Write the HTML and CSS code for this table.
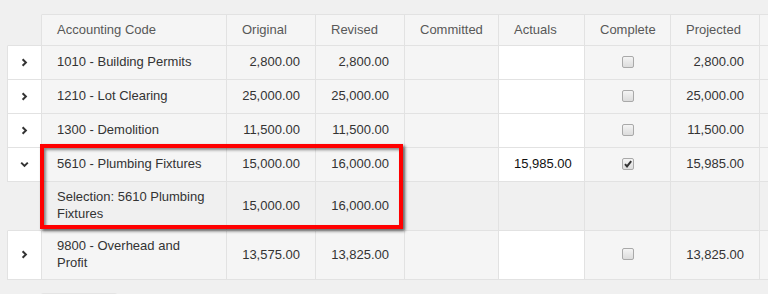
FILE: index.html
```html
<!DOCTYPE html>
<html>
<head>
<meta charset="utf-8">
<link rel="stylesheet" href="styles.css">
</head>
<body>
<div class="page">
  <div class="grid-wrap">
    <table class="grid">
      <thead>
        <tr>
          <th class="c-exp"></th>
          <th class="c-code">Accounting Code</th>
          <th class="c-orig">Original</th>
          <th class="c-rev">Revised</th>
          <th class="c-com">Committed</th>
          <th class="c-act">Actuals</th>
          <th class="c-cmp">Complete</th>
          <th class="c-proj">Projected</th>
          <th class="c-more"></th>
        </tr>
      </thead>
      <tbody>
        <tr>
          <td class="exp"><svg class="chev" width="7" height="9" viewBox="0 0 7 9"><path d="M1.6 1.2 L4.9 4.5 L1.6 7.8" fill="none" stroke="#333" stroke-width="2"/></svg></td>
          <td>1010 - Building Permits</td>
          <td class="num">2,800.00</td>
          <td class="num">2,800.00</td>
          <td></td>
          <td class="white"></td>
          <td class="ctr"><span class="cb"></span></td>
          <td class="num">2,800.00</td>
          <td></td>
        </tr>
        <tr>
          <td class="exp"><svg class="chev" width="7" height="9" viewBox="0 0 7 9"><path d="M1.6 1.2 L4.9 4.5 L1.6 7.8" fill="none" stroke="#333" stroke-width="2"/></svg></td>
          <td>1210 - Lot Clearing</td>
          <td class="num">25,000.00</td>
          <td class="num">25,000.00</td>
          <td></td>
          <td class="white"></td>
          <td class="ctr"><span class="cb"></span></td>
          <td class="num">25,000.00</td>
          <td></td>
        </tr>
        <tr>
          <td class="exp"><svg class="chev" width="7" height="9" viewBox="0 0 7 9"><path d="M1.6 1.2 L4.9 4.5 L1.6 7.8" fill="none" stroke="#333" stroke-width="2"/></svg></td>
          <td>1300 - Demolition</td>
          <td class="num">11,500.00</td>
          <td class="num">11,500.00</td>
          <td></td>
          <td class="white"></td>
          <td class="ctr"><span class="cb"></span></td>
          <td class="num">11,500.00</td>
          <td></td>
        </tr>
        <tr>
          <td class="exp"><svg class="chev" width="9" height="7" viewBox="0 0 9 7"><path d="M1.2 1.6 L4.5 4.9 L7.8 1.6" fill="none" stroke="#333" stroke-width="2"/></svg></td>
          <td>5610 - Plumbing Fixtures</td>
          <td class="num">15,000.00</td>
          <td class="num">16,000.00</td>
          <td></td>
          <td class="white num dark">15,985.00</td>
          <td class="ctr"><span class="cb checked"><svg width="10" height="10" viewBox="0 0 10 10"><path d="M2 5.2 L4 7.4 L8.2 2.2" fill="none" stroke="#333" stroke-width="2"/></svg></span></td>
          <td class="num">15,985.00</td>
          <td></td>
        </tr>
        <tr class="sel">
          <td class="exp-empty"></td>
          <td class="wrap">Selection: 5610 Plumbing Fixtures</td>
          <td class="num">15,000.00</td>
          <td class="num">16,000.00</td>
          <td></td>
          <td></td>
          <td></td>
          <td></td>
          <td></td>
        </tr>
        <tr class="tall">
          <td class="exp"><svg class="chev" width="7" height="9" viewBox="0 0 7 9"><path d="M1.6 1.2 L4.9 4.5 L1.6 7.8" fill="none" stroke="#333" stroke-width="2"/></svg></td>
          <td class="wrap">9800 - Overhead and Profit</td>
          <td class="num">13,575.00</td>
          <td class="num">13,825.00</td>
          <td></td>
          <td class="white"></td>
          <td class="ctr"><span class="cb"></span></td>
          <td class="num">13,825.00</td>
          <td></td>
        </tr>
      </tbody>
    </table>
    <div class="highlight"></div>
  </div>
  <div class="btn"></div>
</div>
</body>
</html>
```
FILE: styles.css
```css
html, body {
  margin: 0;
  padding: 0;
  overflow: hidden;
  background: #f0f0f0;
}
body {
  font-family: "Liberation Sans", Arial, sans-serif;
  font-size: 13px;
  color: #333;
}
.page {
  padding: 14px 0 0 7px;
  width: 900px;
}
.grid-wrap {
  position: relative;
}
.grid {
  table-layout: fixed;
  border-collapse: separate;
  border-spacing: 0;
  width: 853px;
}
.grid th,
.grid td {
  box-sizing: border-box;
  border-right: 1px solid #e2e2e2;
  border-bottom: 1px solid #e2e2e2;
  background: #f5f5f5;
  padding: 0 15px 2px;
  vertical-align: middle;
  text-align: left;
  white-space: nowrap;
  line-height: 17px;
}
.grid th {
  height: 32px;
  border-top: 1px solid #e2e2e2;
  font-weight: normal;
  color: #585858;
}
.grid th.c-exp {
  background: transparent;
  border-top-color: transparent;
  border-left: 1px solid transparent;
}
.c-exp { width: 35px; }
.c-code { width: 185px; }
.c-orig { width: 89px; }
.c-rev { width: 89px; }
.c-com { width: 94px; }
.c-act { width: 86px; }
.c-cmp { width: 86px; }
.c-proj { width: 89px; }
.c-more { width: 100px; }
.grid td {
  height: 34px;
}
.grid tr.sel td,
.grid tr.tall td {
  height: 49px;
}
.grid td.exp {
  background: #fff;
  border-left: 1px solid #e2e2e2;
  text-align: center;
  padding: 0 0 1px;
}
.grid td.exp-empty {
  background: transparent;
  border-left: 1px solid transparent;
  padding: 0;
}
.chev {
  display: block;
  margin: 0 auto;
}
.grid td.num {
  text-align: right;
}
.grid td.white {
  background: #fff;
}
.grid td.dark {
  color: #111;
}
.grid td.wrap {
  white-space: normal;
}
.grid tr.sel td {
  background: #f0f0f0;
}
.grid td.ctr {
  text-align: center;
  padding: 0 0 2px;
}
.cb {
  display: inline-block;
  box-sizing: border-box;
  width: 12px;
  height: 12px;
  border: 1px solid #a9a9a9;
  border-radius: 2px;
  background: linear-gradient(#f4f4f4, #dcdcdc);
  vertical-align: middle;
  position: relative;
  top: -1px;
}
.cb svg {
  display: block;
}
.highlight {
  position: absolute;
  left: 33px;
  top: 130px;
  width: 363px;
  height: 85px;
  box-sizing: border-box;
  border: 4px solid #ff0000;
  box-shadow: 2px 2px 3px rgba(0, 0, 0, 0.6), inset 2px 2px 3px rgba(0, 0, 0, 0.45);
  pointer-events: none;
}
.btn {
  margin: 13px 0 0 34px;
  width: 76px;
  height: 20px;
  background: #e4e4e4;
  border-radius: 2px;
}
```
